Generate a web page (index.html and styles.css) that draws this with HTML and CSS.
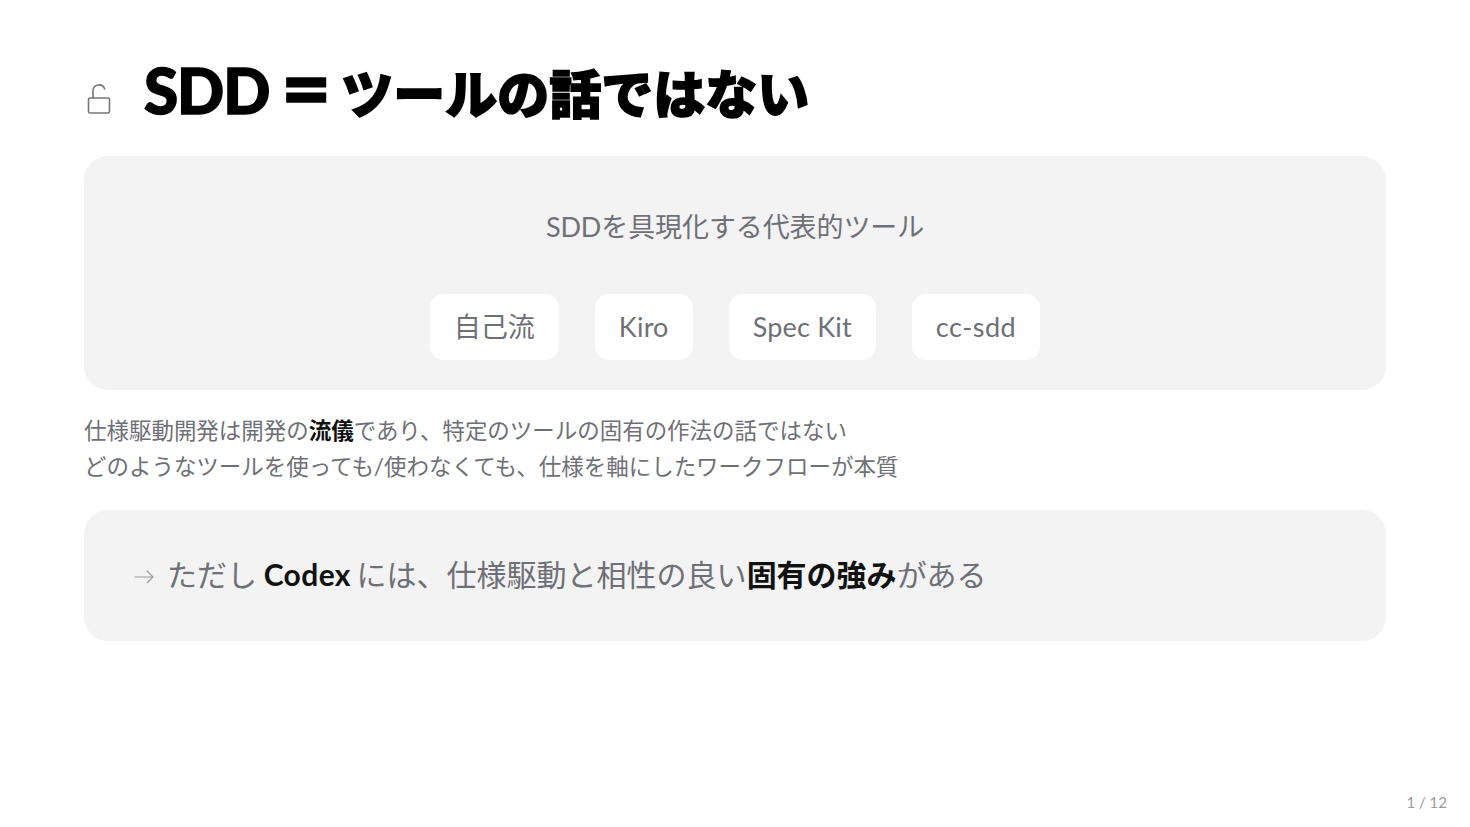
FILE: index.html
```html
<!DOCTYPE html>
<html lang="ja">
<head>
<meta charset="utf-8">
<title>SDD = ツールの話ではない</title>
<link rel="stylesheet" href="styles.css">
</head>
<body>
<main class="slide">
  <header class="title-row">
    <svg class="lock" viewBox="0 0 24 32" width="24" height="32" fill="none" stroke="#777" stroke-width="1.6" stroke-linecap="round">
      <rect x="1.5" y="15" width="21" height="15" rx="1.5"/>
      <path d="M6 15V8a6 6 0 0 1 11.6-2.2"/>
    </svg>
    <h1 class="title"><span class="title-latin">SDD</span><span class="title-eq">=</span>ツールの話ではない</h1>
  </header>
  <section class="card tools">
    <p class="tools-label">SDDを具現化する代表的ツール</p>
    <div class="chips">
      <span class="chip chip-cjk">自己流</span>
      <span class="chip">Kiro</span>
      <span class="chip">Spec Kit</span>
      <span class="chip chip-wide">cc-sdd</span>
    </div>
  </section>
  <p class="body">仕様駆動開発は開発の<strong>流儀</strong>であり、特定のツールの固有の作法の話ではない<br>どのようなツールを使っても/使わなくても、仕様を軸にしたワークフローが本質</p>
  <section class="card callout">
    <svg class="arrow" viewBox="0 0 20 14" width="20" height="14" fill="none" stroke="#999" stroke-width="1.1"><path d="M0.5 7H19M13 1l6 6-6 6"/></svg>
    <p class="callout-text">ただし <strong class="codex">Codex</strong> には、仕様駆動と相性の良い<strong>固有の強み</strong>がある</p>
  </section>
  <footer class="page">1 / 12</footer>
</main>
</body>
</html>
```
FILE: styles.css
```css
* { box-sizing: border-box; }
html, body { margin: 0; padding: 0; background: #fff; }
body {
  font-family: "Lato", "Noto Sans CJK JP", sans-serif;
  color: #6f7077;
}
.slide {
  position: relative;
  width: 1470px;
  height: 827px;
  padding: 64px 84px 0;
  overflow: hidden;
}
.title-row {
  display: flex;
  align-items: center;
  gap: 33px;
  height: 60px;
  margin-bottom: 32px;
}
.lock { flex: none; margin: 10px 0 0 3px; width: 24px; height: 32px; }
.title {
  margin: 0 0 16px;
  font-size: 52px;
  line-height: 60px;
  height: 60px;
  font-weight: 900;
  color: #000;
  -webkit-text-stroke: 1.5px #000;
  white-space: nowrap;
}
.title-latin { font-size: 62px; line-height: 60px; letter-spacing: -1.1px; }
.title-eq { font-size: 86px; line-height: 60px; margin: 0 10px 0 12px; vertical-align: -5px; }
.card { background: #f3f3f3; border-radius: 24px; }
.tools {
  height: 234px;
  padding-top: 52px;
  display: flex;
  flex-direction: column;
  align-items: center;
}
.tools-label { margin: 0 0 48px; font-size: 27px; line-height: 38px; letter-spacing: -0.1px; }
.chips { display: flex; gap: 36px; }
.chip {
  display: block;
  height: 66px;
  padding: 0 24px;
  background: #fff;
  border-radius: 14px;
  font-size: 27px;
  line-height: 66px;
  letter-spacing: 0.2px;
}
.chip-cjk { letter-spacing: 0; }
.chip-wide { letter-spacing: 0.5px; }
.body {
  margin: 23px 0 25px;
  font-size: 22.47px;
  line-height: 36px;
}
.body strong { color: #111; font-weight: 700; }
.callout {
  height: 131px;
  padding-left: 50px;
  display: flex;
  align-items: center;
  gap: 13px;
}
.arrow { flex: none; margin-top: 3px; }
.callout-text { margin: 0 0 4px; font-size: 30px; line-height: 40px; white-space: nowrap; }
.callout-text strong { color: #111; font-weight: 700; }
.callout-text .codex { letter-spacing: 0.4px; margin: 0 -2px 0 -1px; }
.page {
  position: absolute;
  right: 23px;
  bottom: 15px;
  font-size: 15px;
  line-height: 20px;
  color: #999;
}
```
